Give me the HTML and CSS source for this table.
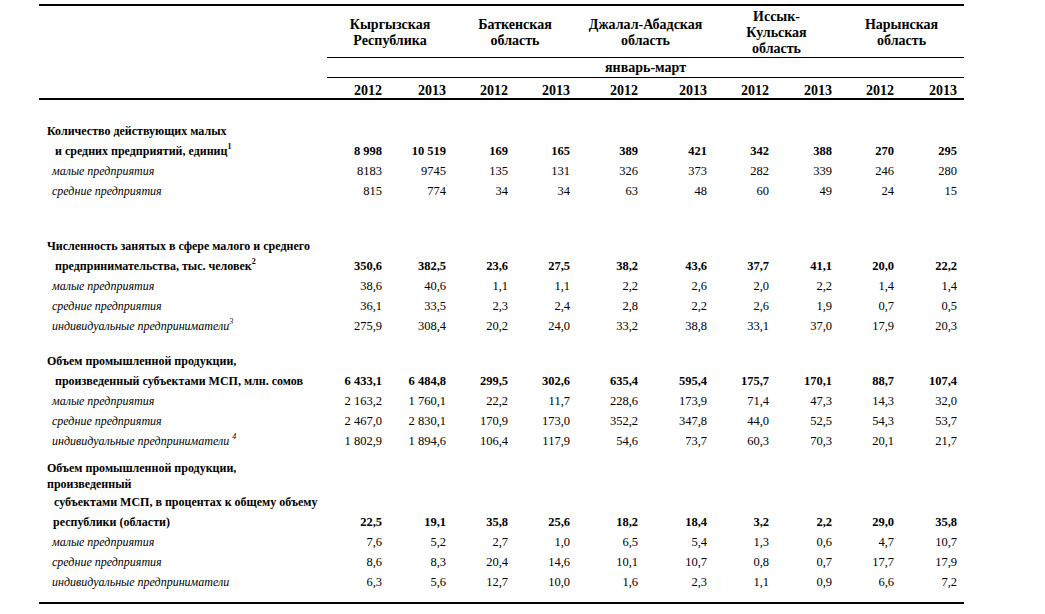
FILE: index.html
```html
<!DOCTYPE html>
<html lang="ru">
<head>
<meta charset="utf-8">
<title>МСП</title>
<link rel="stylesheet" href="styles.css">
</head>
<body>
<table class="stat">
<colgroup>
<col class="c-label"><col class="c62"><col class="c64"><col class="c62"><col class="c62"><col class="c68"><col class="c69"><col class="c62"><col class="c63"><col class="c62"><col class="c63">
</colgroup>
<thead>
<tr class="h-groups">
<th class="h-label" rowspan="3"></th>
<th colspan="2">Кыргызская<br>Республика</th>
<th colspan="2">Баткенская<br>область</th>
<th colspan="2">Джалал-Абадская<br>область</th>
<th colspan="2">Иссык-<br>Кульская<br>область</th>
<th colspan="2">Нарынская<br>область</th>
</tr>
<tr class="h-period">
<th colspan="10">январь-март</th>
</tr>
<tr class="h-years">
<th>2012</th><th>2013</th><th>2012</th><th>2013</th><th>2012</th><th>2013</th><th>2012</th><th>2013</th><th>2012</th><th>2013</th>
</tr>
</thead>
<tbody>
<tr class="sp sp21"><td colspan="11"></td></tr>
<tr class="b"><td class="l">Количество действующих малых</td><td colspan="10"></td></tr>
<tr class="b"><td class="l ind">и средних предприятий, единиц<sup>1</sup></td><td>8 998</td><td>10 519</td><td>169</td><td>165</td><td>389</td><td>421</td><td>342</td><td>388</td><td>270</td><td>295</td></tr>
<tr class="i"><td class="l">малые предприятия</td><td>8183</td><td>9745</td><td>135</td><td>131</td><td>326</td><td>373</td><td>282</td><td>339</td><td>246</td><td>280</td></tr>
<tr class="i"><td class="l">средние предприятия</td><td>815</td><td>774</td><td>34</td><td>34</td><td>63</td><td>48</td><td>60</td><td>49</td><td>24</td><td>15</td></tr>
<tr class="sp sp35"><td colspan="11"></td></tr>
<tr class="b"><td class="l">Численность занятых в сфере малого и среднего</td><td colspan="10"></td></tr>
<tr class="b"><td class="l ind">предпринимательства, тыс. человек<sup>2</sup></td><td>350,6</td><td>382,5</td><td>23,6</td><td>27,5</td><td>38,2</td><td>43,6</td><td>37,7</td><td>41,1</td><td>20,0</td><td>22,2</td></tr>
<tr class="i"><td class="l">малые предприятия</td><td>38,6</td><td>40,6</td><td>1,1</td><td>1,1</td><td>2,2</td><td>2,6</td><td>2,0</td><td>2,2</td><td>1,4</td><td>1,4</td></tr>
<tr class="i"><td class="l">средние предприятия</td><td>36,1</td><td>33,5</td><td>2,3</td><td>2,4</td><td>2,8</td><td>2,2</td><td>2,6</td><td>1,9</td><td>0,7</td><td>0,5</td></tr>
<tr class="i"><td class="l">индивидуальные предприниматели<sup>3</sup></td><td>275,9</td><td>308,4</td><td>20,2</td><td>24,0</td><td>33,2</td><td>38,8</td><td>33,1</td><td>37,0</td><td>17,9</td><td>20,3</td></tr>
<tr class="sp sp15"><td colspan="11"></td></tr>
<tr class="b"><td class="l">Объем промышленной продукции,</td><td colspan="10"></td></tr>
<tr class="b"><td class="l ind">произведенный субъектами МСП, млн. сомов</td><td>6 433,1</td><td>6 484,8</td><td>299,5</td><td>302,6</td><td>635,4</td><td>595,4</td><td>175,7</td><td>170,1</td><td>88,7</td><td>107,4</td></tr>
<tr class="i"><td class="l">малые предприятия</td><td>2 163,2</td><td>1 760,1</td><td>22,2</td><td>11,7</td><td>228,6</td><td>173,9</td><td>71,4</td><td>47,3</td><td>14,3</td><td>32,0</td></tr>
<tr class="i"><td class="l">средние предприятия</td><td>2 467,0</td><td>2 830,1</td><td>170,9</td><td>173,0</td><td>352,2</td><td>347,8</td><td>44,0</td><td>52,5</td><td>54,3</td><td>53,7</td></tr>
<tr class="i"><td class="l">индивидуальные предприниматели <sup>4</sup></td><td>1 802,9</td><td>1 894,6</td><td>106,4</td><td>117,9</td><td>54,6</td><td>73,7</td><td>60,3</td><td>70,3</td><td>20,1</td><td>21,7</td></tr>
<tr class="b multi"><td class="l">Объем промышленной продукции,<br>произведенный</td><td colspan="10"></td></tr>
<tr class="b"><td class="l ind2">субъектами МСП, в процентах к общему объему</td><td colspan="10"></td></tr>
<tr class="b"><td class="l ind3">республики (области)</td><td>22,5</td><td>19,1</td><td>35,8</td><td>25,6</td><td>18,2</td><td>18,4</td><td>3,2</td><td>2,2</td><td>29,0</td><td>35,8</td></tr>
<tr class="i"><td class="l">малые предприятия</td><td>7,6</td><td>5,2</td><td>2,7</td><td>1,0</td><td>6,5</td><td>5,4</td><td>1,3</td><td>0,6</td><td>4,7</td><td>10,7</td></tr>
<tr class="i"><td class="l">средние предприятия</td><td>8,6</td><td>8,3</td><td>20,4</td><td>14,6</td><td>10,1</td><td>10,7</td><td>0,8</td><td>0,7</td><td>17,7</td><td>17,9</td></tr>
<tr class="i"><td class="l">индивидуальные предприниматели</td><td>6,3</td><td>5,6</td><td>12,7</td><td>10,0</td><td>1,6</td><td>2,3</td><td>1,1</td><td>0,9</td><td>6,6</td><td>7,2</td></tr>
<tr class="sp sp-end"><td colspan="11"></td></tr>
</tbody>
</table>
</body>
</html>
```
FILE: styles.css
```css
html, body {
  margin: 0;
  padding: 0;
  background: #fff;
}
body {
  color: #000;
  font-family: "Liberation Serif", "Times New Roman", serif;
}
.stat {
  margin: 4px 0 0 39px;
  width: 925px;
  table-layout: fixed;
  border-collapse: separate;
  border-spacing: 0;
}
.c-label { width: 288px; }
.c62 { width: 62px; }
.c63 { width: 63px; }
.c64 { width: 64px; }
.c68 { width: 68px; }
.c69 { width: 69px; }

.stat th {
  font-weight: bold;
  font-size: 14px;
  padding: 0;
}
.h-groups th {
  border-top: 2px solid #000;
  border-bottom: 1px solid #000;
  line-height: 16px;
  padding-top: 3px;
  text-align: center;
  vertical-align: middle;
}
.h-groups th.h-label {
  border-bottom: 2px solid #000;
}
.h-period th {
  border-bottom: 1px solid #000;
  line-height: 19px;
  text-align: center;
}
.h-years th {
  border-bottom: 2px solid #000;
  line-height: 15px;
  padding: 5px 7px 0 0;
  text-align: right;
}

.stat td {
  padding: 0 7px 0 0;
  font-size: 12.5px;
  line-height: 20px;
  text-align: right;
  white-space: nowrap;
  vertical-align: middle;
}
.stat td.l {
  text-align: left;
  padding: 0 0 0 8px;
  font-size: 12px;
}
.b td { font-weight: bold; }
.i td.l { font-style: italic; padding-left: 13px; }
.b td.ind { padding-left: 16px; }
.b td.ind2 { padding-left: 15px; }
.b td.ind3 { padding-left: 14px; }
.multi td { line-height: 16px; padding-top: 9px; }
.multi td.l { padding-top: 9px; }

.stat sup {
  font-size: 8px;
  line-height: 0;
  vertical-align: 6px;
}
.stat .sp td { padding: 0; line-height: 0; }
.sp21 td { height: 21px; }
.sp35 td { height: 35px; }
.sp15 td { height: 15px; }
.sp-end td { height: 10px; border-bottom: 2px solid #000; }
```
